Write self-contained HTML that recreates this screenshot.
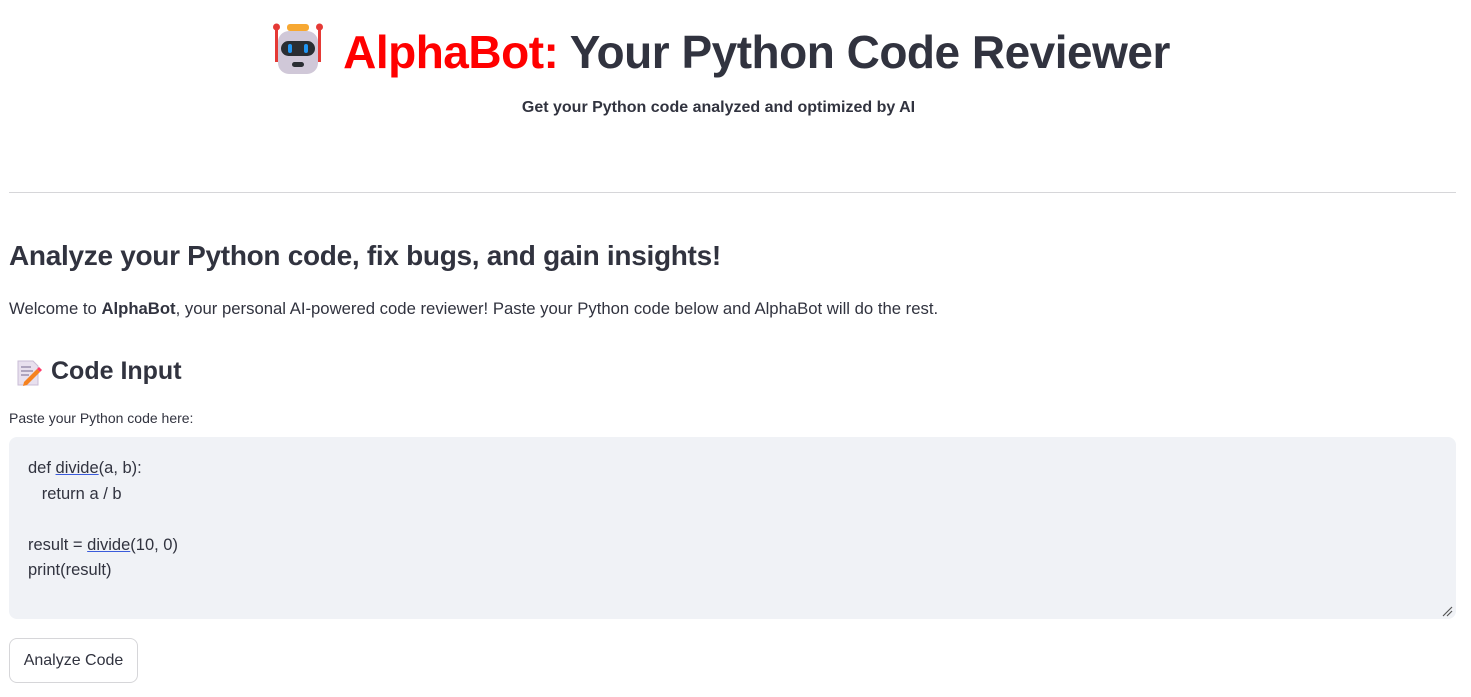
<!DOCTYPE html>
<html><head><meta charset="utf-8"><style>
body{margin:0;background:#fff;color:#31333f;font-family:"Liberation Sans",sans-serif;width:1471px;height:697px;overflow:hidden;position:relative}
.abs{position:absolute}
h1{position:absolute;top:22px;left:0;width:1441px;margin:0;text-align:center;font-size:46px;font-weight:bold;line-height:60px;letter-spacing:-0.5px;white-space:nowrap}
.sub{top:99px;left:0;width:1437px;text-align:center;font-size:16px;font-weight:bold}
hr{position:absolute;top:192px;left:9px;width:1447px;margin:0;border:0;border-top:1px solid #d6d6d9}
.h2{top:240px;left:9px;font-size:28px;font-weight:bold;letter-spacing:-0.3px}
.p{top:299px;left:9px;font-size:16.7px;letter-spacing:0}
.h3{top:357px;left:51px;font-size:25px;font-weight:bold}
.lab{top:410px;left:9px;font-size:14px}
.ta{top:437px;left:9px;width:1447px;height:182px;background:#f0f2f6;border-radius:8px}
.code{top:456px;left:28px;font-size:16.5px;line-height:25.5px;white-space:pre}
.u{text-decoration:underline;text-decoration-color:#3b5bdb}
.btn{top:638px;left:9px;width:129px;height:45px;border:1px solid #d6d6d9;border-radius:8px;box-sizing:border-box;font-size:16px;line-height:43px;text-align:center}
</style></head><body>
<h1><svg width="54" height="54" viewBox="0 0 54 54" style="vertical-align:-8px;margin-right:18px"><rect x="16" y="2" width="22" height="7" rx="3" fill="#f7a832"/><rect x="4" y="6" width="3" height="34" fill="#e53935"/><rect x="47" y="6" width="3" height="34" fill="#e53935"/><circle cx="5.5" cy="5" r="3.5" fill="#e53935"/><circle cx="48.5" cy="5" r="3.5" fill="#e53935"/><rect x="7" y="9" width="40" height="43" rx="11" fill="#d0c8d8"/><rect x="10" y="19" width="34" height="15" rx="7.5" fill="#2a2e33"/><rect x="17" y="22" width="4" height="9" rx="2" fill="#2196f3"/><rect x="33" y="22" width="4" height="9" rx="2" fill="#2196f3"/><rect x="21" y="40" width="12" height="5" rx="2.5" fill="#2a2e33"/></svg><span style="color:#ff0000">AlphaBot:</span> Your Python Code Reviewer</h1>
<div class="abs sub">Get your Python code analyzed and optimized by AI</div>
<hr>
<div class="abs h2">Analyze your Python code, fix bugs, and gain insights!</div>
<div class="abs p">Welcome to <b>AlphaBot</b>, your personal AI-powered code reviewer! Paste your Python code below and AlphaBot will do the rest.</div>
<svg class="abs" style="top:359px;left:15px" width="28" height="28" viewBox="0 0 28 28"><path d="M3 2h15l5 5v19H3z" fill="#e8e0ee" stroke="#c9bdd6"/><path d="M6 8h10M6 12h12M6 16h8" stroke="#9a8fae" stroke-width="1.5"/><path d="M9 23l13-13 3 3-13 13-4 1z" fill="#f58220"/><path d="M22 10l2-2 3 3-2 2z" fill="#ff3b6b"/></svg>
<div class="abs h3">Code Input</div>
<div class="abs lab">Paste your Python code here:</div>
<div class="abs ta"></div>
<svg class="abs" style="top:605px;left:1441px" width="12" height="12"><path d="M2 11L11 2M6 11L11 6" stroke="#555" stroke-width="1.2"/></svg>
<div class="abs code">def <span class="u">divide</span>(a, b):
   return a / b

result = <span class="u">divide</span>(10, 0)
print(result)</div>
<div class="abs btn">Analyze Code</div>
</body></html>
